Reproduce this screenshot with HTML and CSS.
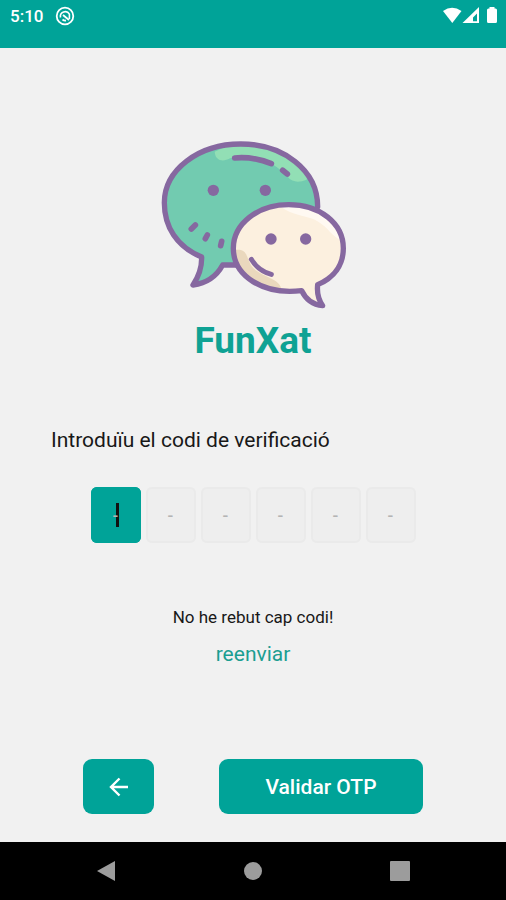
FILE: index.html
```html
<!DOCTYPE html>
<html lang="ca">
<head>
<meta charset="utf-8">
<meta name="viewport" content="width=device-width, initial-scale=1">
<title>FunXat</title>
<link rel="stylesheet" href="styles.css">
</head>
<body>
<header class="status">
  <div class="status-left">
    <span>5:10</span>
    <svg width="20" height="20" viewBox="0 0 20 20" fill="none" stroke="#fff" aria-hidden="true">
      <circle cx="10" cy="10" r="8.300" stroke-width="1.800"/>
      <path d="M5.500 11.500a4.800 4.800 0 0 1 8.900-3.300V13" stroke-width="1.600"/>
      <path d="M8 9l6 5M7.500 13.500q1.500 1.300 3.500 1" stroke-width="1.800"/>
    </svg>
  </div>
  <svg width="56" height="18" viewBox="0 0 56 18" fill="#fff" aria-hidden="true">
    <path d="M1 5Q10-1.500 19.500 5L10.300 17Z"/>
    <path fill-rule="evenodd" d="M20.500 17L37 1V17ZM31 15.300H35V7.500L31 11.500Z"/>
    <path d="M47.500 1h5v1.500h1q1.500 0 1.500 1.500v11.500q0 1.500-1.500 1.500h-7q-1.500 0-1.500-1.500V4q0-1.500 1.500-1.500h1Z"/>
  </svg>
</header>
<main class="screen">
  <svg class="logo" viewBox="30 33 558 504" aria-hidden="true">
    <defs>
      <clipPath id="green-shape"><path d="M155 381C80 350 43 290 43 218C43 120 145 42 272 42C400 42 503 120 503 226L503 405H218C200 438 168 460 129 465Q156 425 155 381Z"/></clipPath>
      <clipPath id="cream-shape"><ellipse cx="416" cy="355" rx="166" ry="131"/></clipPath>
    </defs>
    <path d="M155 381C80 350 43 290 43 218C43 120 145 42 272 42C400 42 503 120 503 226L503 405H218C200 438 168 460 129 465Q156 425 155 381Z" fill="#72cbb0"/>
    <path clip-path="url(#green-shape)" d="M194 65C196 92 218 97 240 85C310 72 370 91 414 142Q434 164 470 149L480 60L270 30Z" fill="#92dfb5"/>
    <g fill="none" stroke="#8668a0" stroke-width="16" stroke-linecap="round" stroke-linejoin="round">
      <path d="M503 230C503 120 400 42 272 42C145 42 43 120 43 218C43 290 80 350 155 381Q156 425 129 465C168 460 200 438 218 405H260"/>
      <path d="M254 84Q310 79 364 101M398 121L412 132" stroke-width="17"/>
      <path d="M136 285L124 297M172 315L166 326M215 334L212 347" stroke-width="17"/>
    </g>
    <path d="M455 482Q474 523 518 527Q499 500 503 464C552 443 580 405 580 355C580 280 510 224 416 224C325 224 250 280 250 355C250 438 340 496 455 482Z" fill="#fcf0df"/>
    <g clip-path="url(#cream-shape)">
      <path d="M390 229C430 260 470 254 505 275C536 294 541 315 580 335V220H420Z" fill="#fff9f2"/>
      <path d="M258 360C292 356 289 382 304 407C328 440 386 443 393 473L380 495H270L240 380Z" fill="#ead8bd"/>
    </g>
    <path d="M455 482Q474 523 518 527Q499 500 503 464C552 443 580 405 580 355C580 280 510 224 416 224C325 224 250 280 250 355C250 438 340 496 455 482Z" fill="none" stroke="#8668a0" stroke-width="16" stroke-linejoin="round"/>
    <path d="M304 388Q325 423 364 433" fill="none" stroke="#8668a0" stroke-width="15" stroke-linecap="round"/>
    <g fill="#8668a0">
      <circle cx="190" cy="181" r="17"/><circle cx="346" cy="181" r="17"/>
      <circle cx="363" cy="327" r="17"/><circle cx="467" cy="327" r="17"/>
    </g>
  </svg>
  <h1 class="brand">FunXat</h1>
  <form class="form">
    <p class="prompt" id="prompt">Introduïu el codi de verificació</p>
    <div class="code" role="group" aria-labelledby="prompt">
      <div class="cell active"><input class="digit" aria-label="Dígit 1" placeholder="-" maxlength="1" inputmode="numeric"></div>
      <div class="cell"><input class="digit" aria-label="Dígit 2" placeholder="-" maxlength="1" inputmode="numeric"></div>
      <div class="cell"><input class="digit" aria-label="Dígit 3" placeholder="-" maxlength="1" inputmode="numeric"></div>
      <div class="cell"><input class="digit" aria-label="Dígit 4" placeholder="-" maxlength="1" inputmode="numeric"></div>
      <div class="cell"><input class="digit" aria-label="Dígit 5" placeholder="-" maxlength="1" inputmode="numeric"></div>
      <div class="cell"><input class="digit" aria-label="Dígit 6" placeholder="-" maxlength="1" inputmode="numeric"></div>
    </div>
    <p class="hint">No he rebut cap codi!</p>
    <a class="resend" href="#">reenviar</a>
    <div class="actions">
      <button class="btn back" type="button" aria-label="Enrere">
        <svg width="20" height="20" viewBox="0 0 20 20" fill="none" stroke="#fff" stroke-width="2.400" aria-hidden="true"><path d="M19 10H2M10.500 1.500L2 10l8.500 8.500"/></svg>
      </button>
      <button class="btn submit" type="submit">Validar OTP</button>
    </div>
  </form>
</main>
<nav class="system" aria-label="Sistema">
  <button class="key" type="button" aria-label="Enrere"><svg width="20" height="22" viewBox="0 0 20 22" fill="#9c9c9c"><path d="M1 11L19 1V21Z"/></svg></button>
  <button class="key" type="button" aria-label="Inici"><svg width="20" height="22" viewBox="0 0 20 22" fill="#9c9c9c"><circle cx="10" cy="11" r="9"/></svg></button>
  <button class="key" type="button" aria-label="Recents"><svg width="20" height="22" viewBox="0 0 20 22" fill="#9c9c9c"><rect y="1" width="20" height="20" rx="1"/></svg></button>
</nav>
</body>
</html>
```
FILE: styles.css
```css
* {
  box-sizing: border-box;
}

body {
  display: flex;
  flex-direction: column;
  min-height: 100vh;
  margin: 0;
  background: #f1f1f1;
  color: #181818;
  font-family: Roboto, "Liberation Sans", sans-serif;
}

h1,
p {
  margin: 0;
}

.status {
  display: flex;
  align-items: flex-start;
  justify-content: space-between;
  height: 48px;
  padding: 6px 8px 0 10px;
  background: #00a398;
  color: #fff;
  font-size: 17px;
  font-weight: 500;
  line-height: 20px;
}

.status-left {
  display: flex;
  gap: 12px;
}

.screen {
  display: flex;
  flex: 1;
  flex-direction: column;
  align-items: center;
  padding: 93px 16px 28px;
}

.logo {
  width: 186px;
  height: 168px;
  overflow: visible;
}

.brand {
  margin-top: 10px;
  color: #0fa294;
  font-size: 37px;
  font-weight: 700;
  line-height: 44px;
}

.form {
  display: flex;
  flex: 1;
  flex-direction: column;
  align-items: center;
  width: 100%;
  max-width: 404px;
  margin-top: 63px;
}

.prompt {
  align-self: flex-start;
  font-size: 21px;
  line-height: 28px;
}

.code {
  display: flex;
  gap: 5px;
  margin-top: 33px;
}

.cell {
  position: relative;
  width: 50px;
  height: 56px;
  border-radius: 6px;
  background: #eee;
}

.digit {
  position: relative;
  width: 100%;
  height: 100%;
  padding: 0;
  border: 2px solid #eaeaea;
  border-radius: 6px;
  background: transparent;
  font: 500 17px Roboto, "Liberation Sans", sans-serif;
  text-align: center;
}

.digit::placeholder {
  color: #b4b4b4;
  opacity: 1;
}

.active {
  background: #00a398;
}

.active .digit {
  border-color: #00a398;
}

/* text cursor, drawn behind the placeholder */
.active::before {
  position: absolute;
  top: 16px;
  left: 25px;
  width: 3px;
  height: 24px;
  background: #111;
  content: "";
}

.hint {
  margin-top: 62px;
  font-size: 17px;
  line-height: 24px;
}

.resend {
  margin-top: 11px;
  color: #1b9e91;
  font-size: 21px;
  line-height: 28px;
  text-decoration: none;
}

.actions {
  display: flex;
  gap: 65px;
  margin-top: auto;
}

.btn {
  display: flex;
  align-items: center;
  justify-content: center;
  height: 55px;
  padding: 0;
  border: 0;
  border-radius: 9px;
  background: #00a398;
  color: #fff;
  font: 500 21px Roboto, "Liberation Sans", sans-serif;
}

.back {
  width: 71px;
}

.submit {
  width: 204px;
}

.system {
  display: flex;
  align-items: center;
  justify-content: space-between;
  height: 58px;
  padding: 0 19%;
  background: #000;
}

.key {
  display: flex;
  padding: 0;
  border: 0;
  background: none;
}
```
